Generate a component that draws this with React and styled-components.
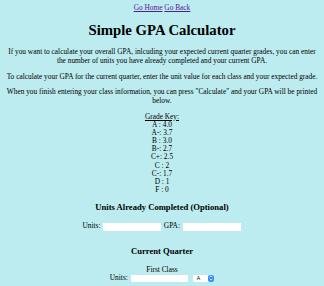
import React from 'react';
import styled, { createGlobalStyle } from 'styled-components';

// the page is drawn at 46% of its natural size
const s = (n) => `${(n * 0.46).toFixed(2)}px`;

const GRADES = [
  ['A', ' : 4.0'],
  ['A-', ': 3.7'],
  ['B', ' : 3.0'],
  ['B-', ': 2.7'],
  ['C+', ': 2.5'],
  ['C', ' : 2'],
  ['C-', ': 1.7'],
  ['D', ' : 1'],
  ['F', ' : 0'],
];

const SERIF = '"Liberation Serif", "Times New Roman", Times, serif';

const GlobalStyle = createGlobalStyle`
  html {
    background: #bcecf0;
  }
  body {
    margin: ${s(8)};
    font-family: ${SERIF};
    font-size: ${s(16)};
    line-height: ${s(18.4)};
    color: #000;
    background: #bcecf0;
    overflow: hidden;
  }
`;

const Page = styled.div`
  text-align: center;
`;

const Nav = styled.div`
  a {
    color: #551a8b;
    text-decoration: underline;
  }
`;

const Title = styled.h1`
  font-family: ${SERIF};
  font-size: ${s(32)};
  line-height: ${s(36.8)};
  font-weight: 700;
  margin: ${s(21)} 0;
`;

const Text = styled.p`
  margin: ${s(16)} 0;
`;

const Key = styled.div`
  margin: ${s(16)} 0;
  line-height: ${s(17.7)};
`;

const KeyHead = styled.div`
  text-decoration: underline;
`;

const Section = styled.h3`
  font-family: ${SERIF};
  font-size: ${s(18.7)};
  line-height: ${s(21.5)};
  font-weight: 700;
  margin: ${(p) => s(p.$top || 20)} 0 ${s(20)};
`;

const Row = styled.div`
  display: flex;
  justify-content: center;
  align-items: center;
  gap: ${s(4)};
`;

const Field = styled.input`
  width: ${s(126)};
  height: ${s(17)};
  box-sizing: border-box;
  border: none;
  background: #fff;
  padding: 0;
  margin: 0 ${s(2)};
  font: inherit;
`;

const Select = styled.div`
  display: inline-flex;
  align-items: center;
  justify-content: space-between;
  width: ${s(46)};
  height: ${s(17)};
  box-sizing: border-box;
  margin-left: ${s(4)};
  padding-left: ${s(8)};
  background: #fff;
  border-radius: 2px;
  font-family: "Liberation Sans", Arial, sans-serif;
  font-size: ${s(11)};
  color: #000;
`;

const Arrows = styled.span`
  display: flex;
  align-items: center;
  justify-content: center;
  width: ${s(13)};
  height: ${s(17)};
  border-radius: 2px;
  background: #3b8cf0;
`;

const ClassBlock = styled.div`
  line-height: ${s(18)};
`;

export default function App() {
  return (
    <Page>
      <GlobalStyle />
      <Nav>
        <a href="#home">Go Home</a> <a href="#back">Go Back</a>
      </Nav>
      <Title>Simple GPA Calculator</Title>
      <Text>
        If you want to calculate your overall GPA, inlcuding your expected current quarter grades, you can
        enter the number of units you have already completed and your current GPA.
      </Text>
      <Text>
        To calculate your GPA for the current quarter, enter the unit value for each class and your expected
        grade.
      </Text>
      <Text>
        When you finish entering your class information, you can press "Calculate" and your GPA will be printed
        below.
      </Text>
      <Key>
        <KeyHead>Grade Key:</KeyHead>
        {GRADES.map(([g, v]) => (
          <div key={g}>
            {g}
            {v}
          </div>
        ))}
      </Key>
      <Section>Units Already Completed (Optional)</Section>
      <Row>
        Units:
        <Field type="text" />
        GPA:
        <Field type="text" />
      </Row>
      <Section $top={35}>Current Quarter</Section>
      <ClassBlock>
        <div>First Class</div>
        <Row>
          Units:
          <Field type="text" />
          <Select>
            A
            <Arrows>
              <svg width="4" height="6" viewBox="0 0 7 11">
                <path d="M1 4 L3.5 1.5 L6 4 M1 7 L3.5 9.5 L6 7" fill="none" stroke="#fff" strokeWidth="1.5" />
              </svg>
            </Arrows>
          </Select>
        </Row>
      </ClassBlock>
    </Page>
  );
}
